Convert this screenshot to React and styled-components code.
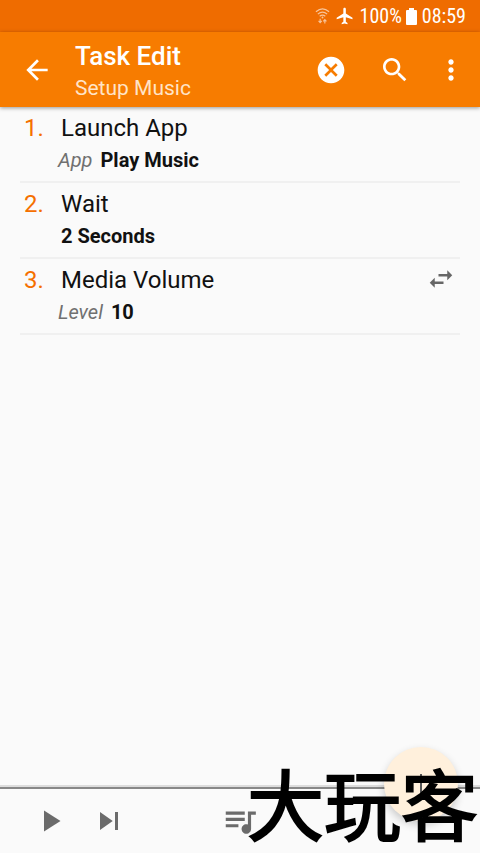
import React from "react";
import styled, { createGlobalStyle } from "styled-components";

const tasks = [
  { id: 1, name: "Launch App", label: "App", value: "Play Music" },
  { id: 2, name: "Wait", value: "2 Seconds" },
  { id: 3, name: "Media Volume", label: "Level", value: "10", swap: true },
];

const icons = {
  back: "M20 11H7.83l5.59-5.59L12 4l-8 8 8 8 1.41-1.41L7.83 13H20v-2z",
  cancel:
    "M12 2C6.47 2 2 6.47 2 12s4.47 10 10 10 10-4.47 10-10S17.53 2 12 2zm5 13.59L15.59 17 12 13.41 8.41 17 7 15.59 10.59 12 7 8.41 8.41 7 12 10.59 15.59 7 17 8.41 13.41 12 17 15.59z",
  search:
    "M15.5 14h-.79l-.28-.27C15.41 12.59 16 11.11 16 9.5 16 5.91 13.09 3 9.5 3S3 5.91 3 9.5 5.91 16 9.5 16c1.61 0 3.09-.59 4.23-1.57l.27.28v.79l5 4.99L20.49 19l-4.99-5zm-6 0C7.01 14 5 11.99 5 9.5S7.01 5 9.5 5 14 7.01 14 9.5 11.99 14 9.5 14z",
  more: "M12 8c1.1 0 2-.9 2-2s-.9-2-2-2-2 .9-2 2 .9 2 2 2zm0 2c-1.1 0-2 .9-2 2s.9 2 2 2 2-.9 2-2-.9-2-2-2zm0 6c-1.1 0-2 .9-2 2s.9 2 2 2 2-.9 2-2-.9-2-2-2z",
  swap: "M6.99 11L3 15l3.99 4v-3H14v-2H6.99v-3zM21 9l-3.99-4v3H10v2h7.01v3L21 9z",
  play: "M8 5v14l11-7z",
  next: "M6 18l8.5-6L6 6v12zM16 6v12h2V6h-2z",
  queue:
    "M15 6H3v2h12V6zm0 4H3v2h12v-2zM3 16h8v-2H3v2zM17 6v8.18c-.31-.11-.65-.18-1-.18-1.66 0-3 1.34-3 3s1.34 3 3 3 3-1.34 3-3V8h3V6h-5z",
  plane:
    "M21 16v-2l-8-5V3.5c0-.83-.67-1.5-1.5-1.5S10 2.67 10 3.5V9l-8 5v2l8-2.5V19l-2 1.5V22l3.5-1 3.5 1v-1.5L13 19v-5.5l8 2.5z",
};

function Icon({ name, size }) {
  return (
    <svg width={size} height={size} viewBox="0 0 24 24" fill="currentColor">
      <path d={icons[name]} />
    </svg>
  );
}

function WifiIcon() {
  return (
    <svg width="15" height="18" viewBox="0 0 16 18" fill="none" stroke="#fff" opacity="0.6">
      <path d="M1 4.5Q8-1.5 15 4.5M3 7Q8 2.8 13 7M5 9.3Q8 7 11 9.3" strokeWidth="1.3" />
      <circle cx="8" cy="10.6" r="1" fill="#fff" stroke="none" />
      <path d="M5.5 12v4M3.8 14.3l1.7 1.9 1.7-1.9M10.5 17v-4M8.8 14.7l1.7-1.9 1.7 1.9" strokeWidth="1.2" />
    </svg>
  );
}

function BatteryIcon() {
  return (
    <svg width="11" height="17" viewBox="0 0 11 17" fill="#fff">
      <path d="M3 0h5v2H10q1 0 1 1v13q0 1-1 1H1q-1 0-1-1V3q0-1 1-1h2z" />
    </svg>
  );
}

function App() {
  return (
    <Page>
      <GlobalStyle />
      <StatusBar>
        <WifiIcon />
        <Icon name="plane" size={20} />
        <Battery>
          <span>100%</span>
          <BatteryIcon />
        </Battery>
        <span>08:59</span>
      </StatusBar>
      <Toolbar>
        <IconButton aria-label="Back">
          <Icon name="back" size={32} />
        </IconButton>
        <Titles>
          <Title>Task Edit</Title>
          <Subtitle>Setup Music</Subtitle>
        </Titles>
        <Actions>
          <IconButton aria-label="Cancel">
            <Icon name="cancel" size={32} />
          </IconButton>
          <IconButton aria-label="Search">
            <Icon name="search" size={32} />
          </IconButton>
        </Actions>
        <IconButton aria-label="More options">
          <Icon name="more" size={32} />
        </IconButton>
      </Toolbar>
      <TaskList>
        {tasks.map((task) => (
          <TaskRow key={task.id}>
            <TaskNumber>{task.id}.</TaskNumber>
            <TaskBody>
              <TaskName>{task.name}</TaskName>
              <TaskDetail $labelled={Boolean(task.label)}>
                {task.label && <em>{task.label}</em>}
                <strong>{task.value}</strong>
              </TaskDetail>
            </TaskBody>
            {task.swap && (
              <SwapButton aria-label="Swap">
                <Icon name="swap" size={30} />
              </SwapButton>
            )}
          </TaskRow>
        ))}
      </TaskList>
      <Player>
        <PlayerButton aria-label="Play">
          <Icon name="play" size={36} />
        </PlayerButton>
        <PlayerButton aria-label="Next">
          <Icon name="next" size={36} />
        </PlayerButton>
        <QueueButton aria-label="Queue">
          <Icon name="queue" size={38} />
        </QueueButton>
        <AddButton aria-label="Add">
          <svg width="24" height="24" viewBox="0 0 24 24" stroke="#555" strokeWidth="2">
            <path d="M12 2v20" />
          </svg>
        </AddButton>
        <Watermark>大玩客</Watermark>
      </Player>
    </Page>
  );
}

export default App;

const GlobalStyle = createGlobalStyle`
  * {
    box-sizing: border-box;
  }
  body {
    margin: 0;
    background: #fafafa;
    font-family: Roboto, "Noto Sans CJK SC", sans-serif;
  }
  svg {
    display: block;
    flex-shrink: 0;
  }
`;

const Page = styled.div`
  display: flex;
  flex-direction: column;
  min-height: 100vh;
  color: #111;
`;

const StatusBar = styled.div`
  display: flex;
  align-items: center;
  justify-content: flex-end;
  gap: 5px;
  height: 32px;
  padding-right: 14px;
  background: #ef6c00;
  color: #fff;
  font-family: "Roboto Condensed", Roboto, sans-serif;
  font-size: 20px;
`;

const Battery = styled.div`
  display: flex;
  align-items: center;
  gap: 4px;
`;

const Toolbar = styled.header`
  display: flex;
  align-items: center;
  height: 75px;
  padding: 0 13px 0 21px;
  background: #f77c00;
  color: #fff;
  box-shadow: 0 1px 4px rgba(0, 0, 0, 0.4);
`;

const IconButton = styled.button`
  display: flex;
  padding: 0;
  border: none;
  background: none;
  color: inherit;
`;

const Titles = styled.div`
  flex: 1;
  padding: 4px 0 0 22px;
`;

const Title = styled.h1`
  margin: 0;
  font-size: 26px;
  font-weight: 500;
  line-height: 32px;
`;

const Subtitle = styled.div`
  color: #ffe4c8;
  font-size: 21px;
  line-height: 32px;
`;

const Actions = styled.div`
  display: flex;
  gap: 32px;
  margin-right: 24px;
`;

const TaskList = styled.ol`
  flex: 1;
  margin: 0;
  padding: 0 20px;
  list-style: none;
`;

const TaskRow = styled.li`
  display: flex;
  height: 76px;
  padding: 5px 4px 0;
  border-bottom: 2px solid #f0f0f0;
`;

const TaskNumber = styled.span`
  width: 37px;
  color: #f57000;
  font-size: 24px;
  line-height: 32px;
`;

const TaskBody = styled.div`
  flex: 1;
`;

const TaskName = styled.div`
  font-size: 24px;
  line-height: 32px;
`;

const TaskDetail = styled.div`
  display: flex;
  gap: 8px;
  margin-left: ${(props) => (props.$labelled ? "-3px" : "0")};
  font-size: 20px;
  line-height: 32px;

  em {
    color: #707070;
    font-weight: 400;
  }

  strong {
    font-weight: 700;
  }
`;

const SwapButton = styled(IconButton)`
  align-self: flex-start;
  color: #666;
`;

const Player = styled.footer`
  position: relative;
  display: flex;
  align-items: center;
  gap: 23px;
  height: 66px;
  padding-left: 32px;
  border-top: 2px solid #888;
  box-shadow: 0 -2px 0 #ddd;
`;

const PlayerButton = styled(IconButton)`
  color: #6b6b6b;
`;

const QueueButton = styled(PlayerButton)`
  margin-left: 71px;
`;

const AddButton = styled(IconButton)`
  position: absolute;
  right: 22px;
  top: -42px;
  align-items: center;
  justify-content: center;
  width: 74px;
  height: 74px;
  border-radius: 50%;
  background: #fff0dc;
  box-shadow: 0 4px 8px rgba(0, 0, 0, 0.2);
`;

/* Sits over the player and the add button */
const Watermark = styled.div`
  position: absolute;
  right: 2px;
  bottom: 1px;
  color: #000;
  font-family: "Liberation Sans", "Noto Sans CJK SC", sans-serif;
  font-size: 77px;
  font-weight: 400;
  line-height: 88px;
  white-space: nowrap;
  pointer-events: none;
  -webkit-text-stroke: 2px #000;
`;
